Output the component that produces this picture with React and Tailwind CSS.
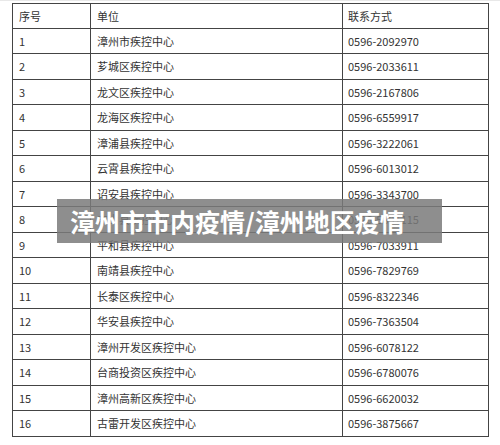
import React from "react";

const rows = [
  ["1", "漳州市疾控中心", "0596-2092970"],
  ["2", "芗城区疾控中心", "0596-2033611"],
  ["3", "龙文区疾控中心", "0596-2167806"],
  ["4", "龙海区疾控中心", "0596-6559917"],
  ["5", "漳浦县疾控中心", "0596-3222061"],
  ["6", "云霄县疾控中心", "0596-6013012"],
  ["7", "诏安县疾控中心", "0596-3343700"],
  ["8", "东山县疾控中心", "0596-5891115"],
  ["9", "平和县疾控中心", "0596-7033911"],
  ["10", "南靖县疾控中心", "0596-7829769"],
  ["11", "长泰区疾控中心", "0596-8322346"],
  ["12", "华安县疾控中心", "0596-7363504"],
  ["13", "漳州开发区疾控中心", "0596-6078122"],
  ["14", "台商投资区疾控中心", "0596-6780076"],
  ["15", "漳州高新区疾控中心", "0596-6620032"],
  ["16", "古雷开发区疾控中心", "0596-3875667"],
];

function Row({ cells, first }) {
  return (
    <div className={`flex h-[25.5px] border-b border-[#444] ${first ? "border-t" : ""}`}>
      <div className="w-[78px] pl-[6px] pt-[5px] border-l border-[#444]">{cells[0]}</div>
      <div className="w-[252px] pl-[6px] pt-[5px] border-l border-[#444]">{cells[1]}</div>
      <div className="w-[147px] pl-[5px] pt-[5px] border-l border-r border-[#444]">{cells[2]}</div>
    </div>
  );
}

export default function App() {
  return (
    <div className="relative w-[500px] h-[445px] bg-white overflow-hidden text-[11px] leading-[14px] text-[#333]" style={{ fontFamily: '"Noto Sans CJK SC", "Noto Sans", sans-serif' }}>
      <div className="h-px bg-[#e8e8e8]" />
      <div className="ml-[12px] mt-[2px] w-[477px]">
        <Row cells={["序号", "单位", "联系方式"]} first />
        {rows.map((r) => (
          <Row key={r[0]} cells={r} />
        ))}
      </div>

      {/* 标题横幅 */}
      <div className="absolute left-[57px] top-[199px] w-[385px] h-[44px] bg-[#7a7a7a]/85 flex items-center pl-[13px]">
        <span className="text-white font-bold text-[25px] leading-none">漳州市市内疫情/漳州地区疫情</span>
      </div>
    </div>
  );
}
